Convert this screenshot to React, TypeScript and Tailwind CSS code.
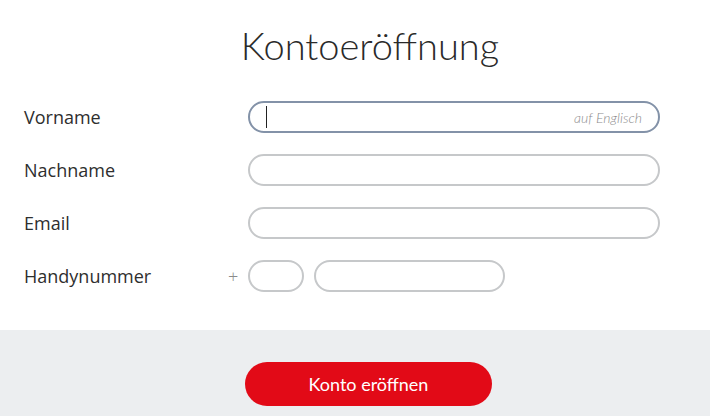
export default function App() {
  const rows = ["Vorname", "Nachname", "Email"];
  return (
    <div className="w-[710px] h-[416px] bg-white flex flex-col" style={{ fontFamily: "Lato, 'Open Sans', sans-serif" }}>
      <div className="h-[330px] flex flex-col">
        <h1 className="text-center text-[38px] font-light text-[#2a2a2a] leading-none pt-[26px] pl-[30px]">Kontoeröffnung</h1>
        <div className="flex flex-col gap-[21px] pt-[37px]">
          {rows.map((label, i) => (
            <div key={label} className="flex items-center h-8">
              <span className="w-[248px] pl-6 text-[18px] text-[#2e2e2e] font-['Open_Sans']">{label}</span>
              <div
                className={
                  i === 0
                    ? "w-[412px] h-8 rounded-full border-2 border-[#8392a8] flex items-center justify-between pl-4 pr-4"
                    : "w-[412px] h-8 rounded-full border-2 border-[#c6c8ca]"
                }
              >
                {i === 0 && (
                  <>
                    <span className="w-px h-[22px] bg-[#222]" />
                    <span className="text-[14px] font-light italic text-[#8d8d8d]">auf Englisch</span>
                  </>
                )}
              </div>
            </div>
          ))}
          <div className="flex items-center h-8">
            <span className="w-[228px] pl-6 text-[18px] text-[#2e2e2e] font-['Open_Sans']">Handynummer</span>
            <span className="w-5 text-[18px] text-[#8a8a8a] font-['Open_Sans'] font-light">+</span>
            <div className="w-14 h-8 rounded-full border-2 border-[#c6c8ca]" />
            <div className="ml-[10px] w-[191px] h-8 rounded-full border-2 border-[#c6c8ca]" />
          </div>
        </div>
      </div>
      <div className="flex-1 bg-[#eceef0] flex justify-center pt-8">
        <button className="ml-[27px] w-[247px] h-11 rounded-full bg-[#e20a17] text-white text-[18px]">Konto eröffnen</button>
      </div>
    </div>
  );
}
